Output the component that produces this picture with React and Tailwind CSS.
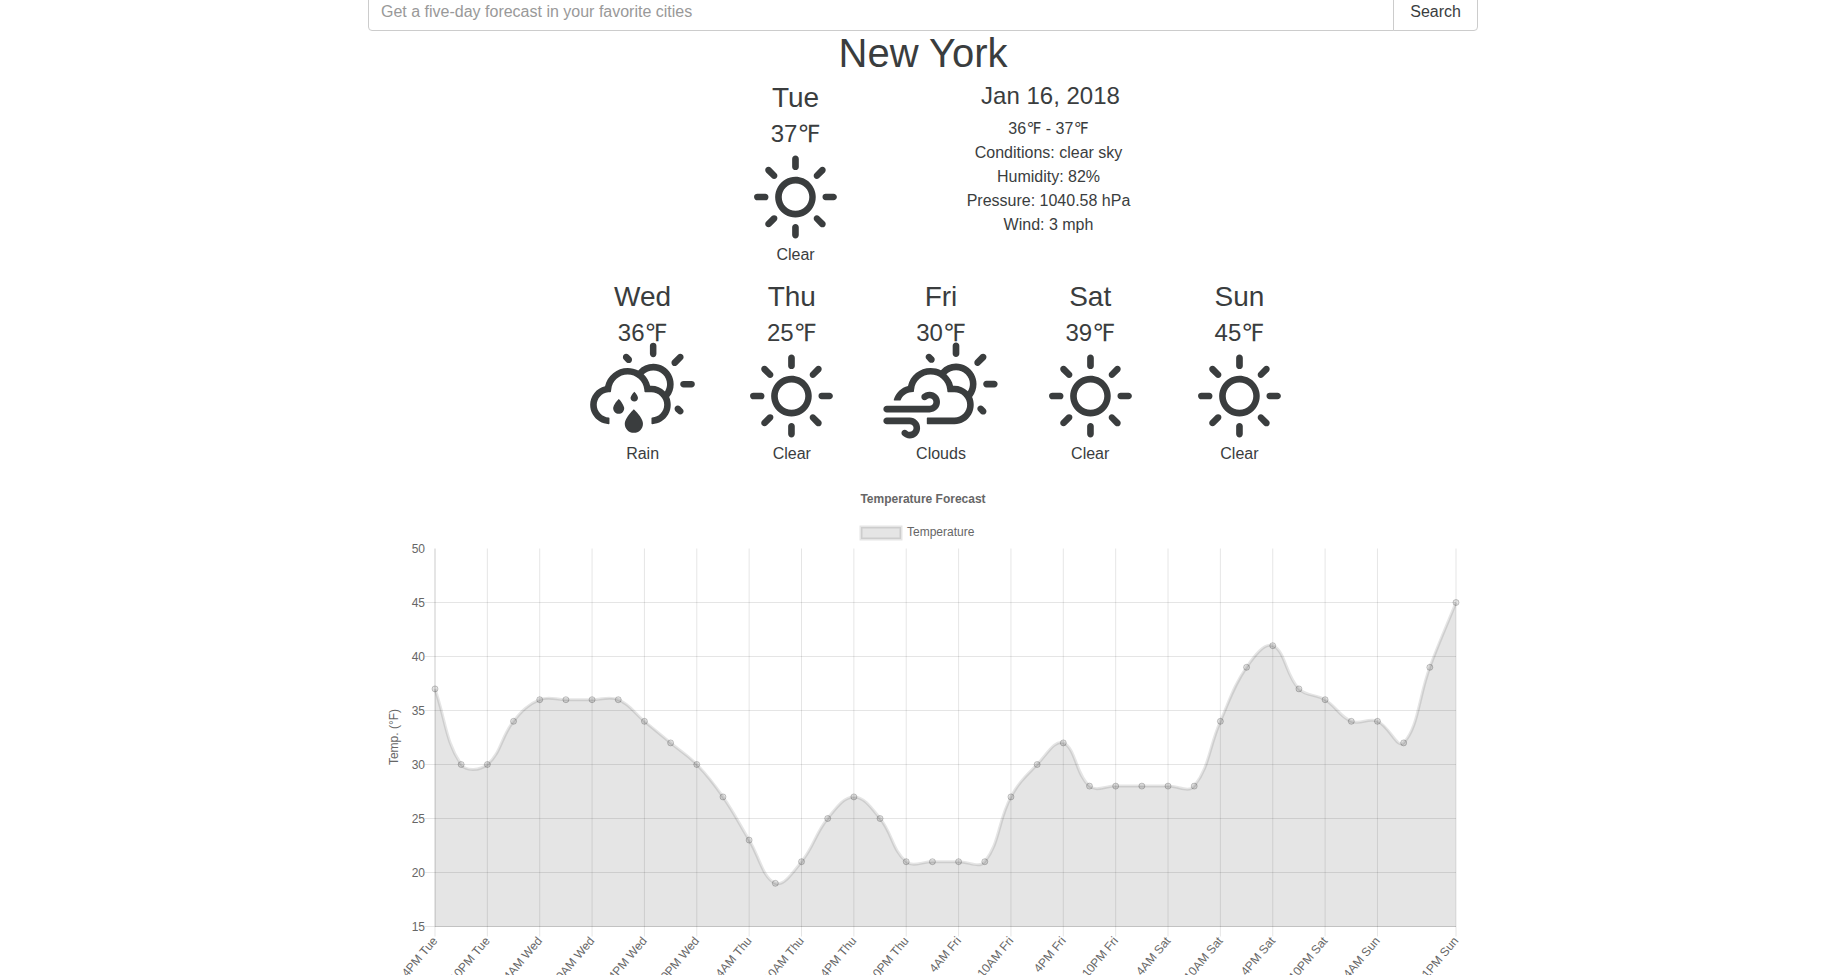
import { WiDaySunny, WiDaySprinkle, WiDayCloudyGusts } from "react-icons/wi";

const days = [
  { day: "Wed", temp: 36, label: "Rain", Icon: WiDaySprinkle },
  { day: "Thu", temp: 25, label: "Clear", Icon: WiDaySunny },
  { day: "Fri", temp: 30, label: "Clouds", Icon: WiDayCloudyGusts },
  { day: "Sat", temp: 39, label: "Clear", Icon: WiDaySunny },
  { day: "Sun", temp: 45, label: "Clear", Icon: WiDaySunny },
];

const temps = [
  37, 30, 30, 34, 36, 36, 36, 36, 34, 32, 30, 27, 23, 19, 21, 25, 27, 25, 21, 21,
  21, 21, 27, 30, 32, 28, 28, 28, 28, 28, 34, 39, 41, 37, 36, 34, 34, 32, 39, 45,
];

const hours = ["4PM", "10PM", "4AM", "10AM"];
const names = ["Tue", "Wed", "Thu", "Fri", "Sat", "Sun"];
const xTicks = Array.from({ length: 19 }, (_, i) => ({
  index: i * 2,
  text: `${hours[i % 4]} ${names[Math.floor((i + 2) / 4)]}`,
})).concat({ index: 39, text: "1PM Sun" });
const yTicks = [50, 45, 40, 35, 30, 25, 20, 15];

// Plot area inside the chart's viewBox
const plot = { left: 52, right: 1073, top: 76.5, bottom: 454.5 };
const px = (i) => plot.left + (i * (plot.right - plot.left)) / (temps.length - 1);
const py = (t) => plot.bottom - ((t - 15) * (plot.bottom - plot.top)) / 35;
const clamp = (v, a, b) => Math.max(a, Math.min(b, v));

// Smooth curve whose control points follow the neighbouring points
function curve(tension) {
  const pts = temps.map((t, i) => ({ x: px(i), y: py(t) }));
  const ctl = pts.map((p, i) => {
    const prev = pts[i - 1] || p;
    const next = pts[i + 1] || p;
    const d1 = Math.hypot(p.x - prev.x, p.y - prev.y);
    const d2 = Math.hypot(next.x - p.x, next.y - p.y);
    const fa = (tension * d1) / (d1 + d2);
    const fb = (tension * d2) / (d1 + d2);
    const cap = (x, y) => [clamp(x, plot.left, plot.right), clamp(y, plot.top, plot.bottom)];
    return {
      before: cap(p.x - fa * (next.x - prev.x), p.y - fa * (next.y - prev.y)),
      after: cap(p.x + fb * (next.x - prev.x), p.y + fb * (next.y - prev.y)),
    };
  });
  return pts
    .map((p, i) =>
      i === 0 ? `M${p.x},${p.y}` : `C${ctl[i - 1].after} ${ctl[i].before} ${p.x},${p.y}`
    )
    .join("");
}

function Chart() {
  const line = curve(0.4);
  return (
    <svg
      viewBox="0 0 1080 540"
      className="block w-full font-['Liberation_Sans',Arial,sans-serif] text-[12px]"
      role="img"
      aria-label="Temperature Forecast"
    >
      <g stroke="#000" strokeOpacity="0.1" fill="none">
        {xTicks.map(({ index }) => (
          <line key={index} x1={px(index)} x2={px(index)} y1={plot.top} y2={plot.bottom + 10} />
        ))}
        {yTicks.slice(1).map((t) => (
          <line key={t} x1={plot.left - 10} x2={plot.right} y1={py(t)} y2={py(t)} />
        ))}
        <line x1={plot.left} x2={plot.left} y1={plot.top} y2={plot.bottom} />
        <line x1={plot.left} x2={plot.right} y1={plot.bottom} y2={plot.bottom} />
      </g>
      <path d={`${line}V${plot.bottom}H${plot.left}Z`} fill="#000" fillOpacity="0.1" />
      <path d={line} fill="none" stroke="#000" strokeOpacity="0.1" strokeWidth="3" />
      {temps.map((t, i) => (
        <circle
          key={i}
          cx={px(i)}
          cy={py(t)}
          r="3"
          fill="#000"
          fillOpacity="0.1"
          stroke="#000"
          strokeOpacity="0.2"
        />
      ))}
      <rect x="478" y="55" width="40" height="12" fill="#000" fillOpacity="0.1" stroke="#000" strokeOpacity="0.1" strokeWidth="3" />
      <g fill="#666">
        <text x="540" y="31" textAnchor="middle" fontWeight="bold">Temperature Forecast</text>
        <text x="524" y="64">Temperature</text>
        {yTicks.map((t) => (
          <text key={t} x={plot.left - 10} y={py(t) + 4} textAnchor="end">{t}</text>
        ))}
        {xTicks.map(({ index, text }) => (
          <text
            key={index}
            textAnchor="end"
            transform={`translate(${px(index)} ${plot.bottom + 12}) rotate(-50)`}
            y="4"
          >
            {text}
          </text>
        ))}
        <text textAnchor="middle" transform="translate(15 265) rotate(-90)">Temp. (°F)</text>
      </g>
    </svg>
  );
}

function Day({ day, temp, label, Icon }) {
  return (
    <div className="flex flex-col items-center">
      <h2 className="text-[28px] leading-10">{day}</h2>
      <p className="h-8 text-2xl leading-8">{temp}℉</p>
      <Icon className="-mt-[10px] -mb-[14px] size-[117px]" aria-hidden="true" />
      <p>{label}</p>
    </div>
  );
}

export default function App() {
  return (
    <div className="h-screen overflow-hidden bg-white font-['Liberation_Sans','DejaVu_Sans',sans-serif] text-base text-[#3a3d3e]">
      <main className="mx-auto max-w-[1140px] px-[15px]">
        <form className="-mt-2 flex h-[39px]" onSubmit={(e) => e.preventDefault()}>
          <input
            type="text"
            aria-label="City"
            placeholder="Get a five-day forecast in your favorite cities"
            className="min-w-0 flex-1 rounded-l border border-[#ccc] px-3 placeholder:text-[#999] outline-none"
          />
          <button type="submit" className="-ml-px rounded-r border border-[#ccc] bg-white px-4">
            Search
          </button>
        </form>
        <h1 className="mb-[3px] text-center text-[40px] leading-[44px]">New York</h1>
        <section className="flex justify-center text-center">
          <div className="w-[255px]">
            <Day day="Tue" temp={37} label="Clear" Icon={WiDaySunny} />
          </div>
          <div className="w-[255px]">
            <h3 className="mb-[3px] text-2xl leading-9">Jan 16, 2018</h3>
            <div className="pr-1">
              <p>36℉ - 37℉</p>
              <p>Conditions: clear sky</p>
              <p>Humidity: 82%</p>
              <p>Pressure: 1040.58 hPa</p>
              <p>Wind: 3 mph</p>
            </div>
          </div>
        </section>
        <section className="mx-auto mt-[10px] grid max-w-[782px] grid-cols-5 pl-9">
          {days.map((d) => (
            <Day key={d.day} {...d} />
          ))}
        </section>
        <section className="mt-[6px] px-[15px]">
          <Chart />
        </section>
      </main>
    </div>
  );
}
